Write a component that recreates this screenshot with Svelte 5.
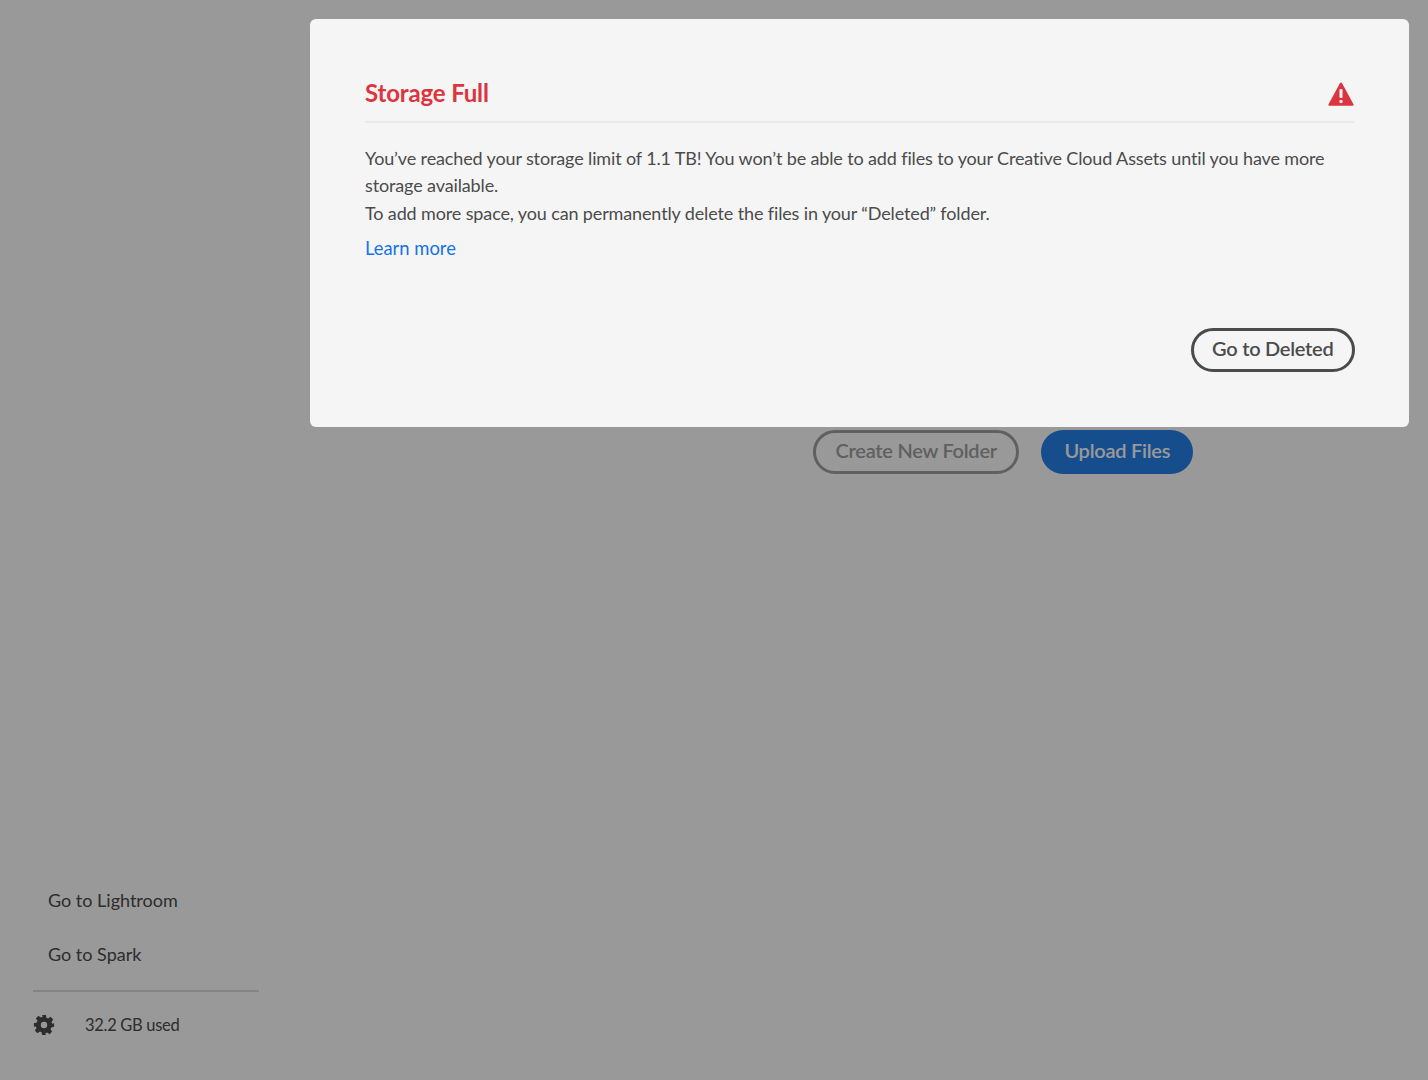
<script>
  let links = ['Go to Lightroom', 'Go to Spark'];
</script>

<div class="page">
  <aside class="sidebar">
    <nav class="links">
      {#each links as link}
        <a class="side-link" href="#top">{link}</a>
      {/each}
    </nav>
    <div class="usage">
      <svg class="gear" width="22" height="22" viewBox="0 0 24 24" fill="currentColor" aria-hidden="true">
        <path fill-rule="evenodd" d="M10 1h4l.6 3.1 1.900.8 2.700-1.800 2.800 2.800-1.800 2.700.8 1.900L23 10v4l-3.100.6-.8 1.900 1.800 2.700-2.800 2.800-2.700-1.800-1.900.8L14 23h-4l-.6-3.100-1.900-.8-2.700 1.800-2.800-2.800 1.800-2.700-.8-1.900L1 14v-4l3.100-.6.8-1.900-1.800-2.700 2.800-2.800 2.700 1.800 1.900-.8zM12 8.500a3.500 3.500 0 1 0 0 7 3.500 3.500 0 0 0 0-7z" />
      </svg>
      <span>32.2 GB used</span>
    </div>
  </aside>
  <main class="content">
    <div class="actions">
      <button class="btn secondary">Create New Folder</button>
      <button class="btn primary">Upload Files</button>
    </div>
  </main>
</div>

<div class="overlay">
  <div class="dialog" role="alertdialog">
    <header class="dialog-head">
      <h2>Storage Full</h2>
      <svg class="alert" width="26" height="24" viewBox="0 0 26 24" aria-hidden="true">
        <path fill="#dc3540" d="M13 0.500c.5 0 .9.300 1.100.700l11.500 21.300c.3.600-.1 1.200-.8 1.200H1.200c-.7 0-1.100-.6-.8-1.200L11.900 1.200c.2-.4.600-.7 1.100-.7z" />
        <rect x="11.500" y="7" width="3" height="9" rx=".8" fill="#f5f5f5" />
        <rect x="11.500" y="18" width="3" height="3" rx=".8" fill="#f5f5f5" />
      </svg>
    </header>
    <p class="body">You’ve reached your storage limit of 1.1 TB! You won’t be able to add files to your Creative Cloud Assets until you have more storage available.<br />To add more space, you can permanently delete the files in your “Deleted” folder.</p>
    <a class="learn" href="#top">Learn more</a>
    <footer class="dialog-foot">
      <button class="btn dark">Go to Deleted</button>
    </footer>
  </div>
</div>

<style>
  :global(body) {
    margin: 0;
    background: #fff;
    font-family: Lato, "Open Sans", sans-serif;
  }

  .page {
    display: flex;
    height: 1080px;
    overflow: hidden;
  }

  .sidebar {
    width: 310px;
    box-sizing: border-box;
    padding: 0 51px 44px 33px;
    display: flex;
    flex-direction: column;
    justify-content: flex-end;
    color: #4b4b4b;
  }

  .links {
    display: flex;
    flex-direction: column;
    gap: 32px;
    padding: 0 0 25px 15px;
    border-bottom: 2px solid #dcdcdc;
  }

  .side-link {
    color: #4b4b4b;
    text-decoration: none;
    font-size: 18px;
    line-height: 22px;
  }

  .usage {
    display: flex;
    align-items: center;
    gap: 30px;
    margin-top: 22px;
    font-size: 16.500px;
    line-height: 22px;
    letter-spacing: -0.3px;
  }

  .content {
    flex: 1;
    padding: 430px 0 0 503px;
  }

  .actions {
    display: flex;
    gap: 22px;
  }

  .btn {
    box-sizing: border-box;
    height: 44px;
    padding: 0 19px 4px;
    border-radius: 22px;
    border: 3px solid transparent;
    font-family: inherit;
    font-size: 20px;
    font-weight: 600;
    letter-spacing: -0.25px;
    background: transparent;
  }

  .secondary {
    padding: 0 19.500px 4px;
    border-color: #a0a0a0;
    color: #a0a0a0;
  }

  .primary {
    padding: 0 20px 4px;
    background: #2680eb;
    color: #fff;
  }

  .dark {
    padding: 0 18.500px 4px;
    border-color: #4b4b4b;
    color: #4b4b4b;
    margin-right: -1px;
  }

  .overlay {
    position: fixed;
    inset: 0;
    background: rgba(0, 0, 0, 0.4);
  }

  .dialog {
    position: absolute;
    left: 310px;
    top: 19px;
    width: 1099px;
    height: 408px;
    box-sizing: border-box;
    padding: 55px;
    background: #f5f5f5;
    border-radius: 6px;
    display: flex;
    flex-direction: column;
  }

  .dialog-head {
    display: flex;
    justify-content: space-between;
    align-items: flex-end;
    height: 49px;
    padding-bottom: 14px;
    box-sizing: border-box;
    border-bottom: 2px solid #e9e9e9;
  }

  .alert {
    margin-bottom: 1px;
  }

  h2 {
    margin: 0 0 -1px;
    color: #dc3540;
    font-size: 24px;
    line-height: 30px;
    font-weight: 700;
    letter-spacing: -0.15px;
  }

  .body {
    margin: 21.700px 0 0;
    color: #4b4b4b;
    font-size: 18px;
    line-height: 27.500px;
    letter-spacing: -0.13px;
  }

  .learn {
    margin-top: 8.300px;
    color: #1473e6;
    text-decoration: none;
    font-size: 18.400px;
    line-height: 27px;
  }

  .dialog-foot {
    margin-top: auto;
    display: flex;
    justify-content: flex-end;
  }
</style>
